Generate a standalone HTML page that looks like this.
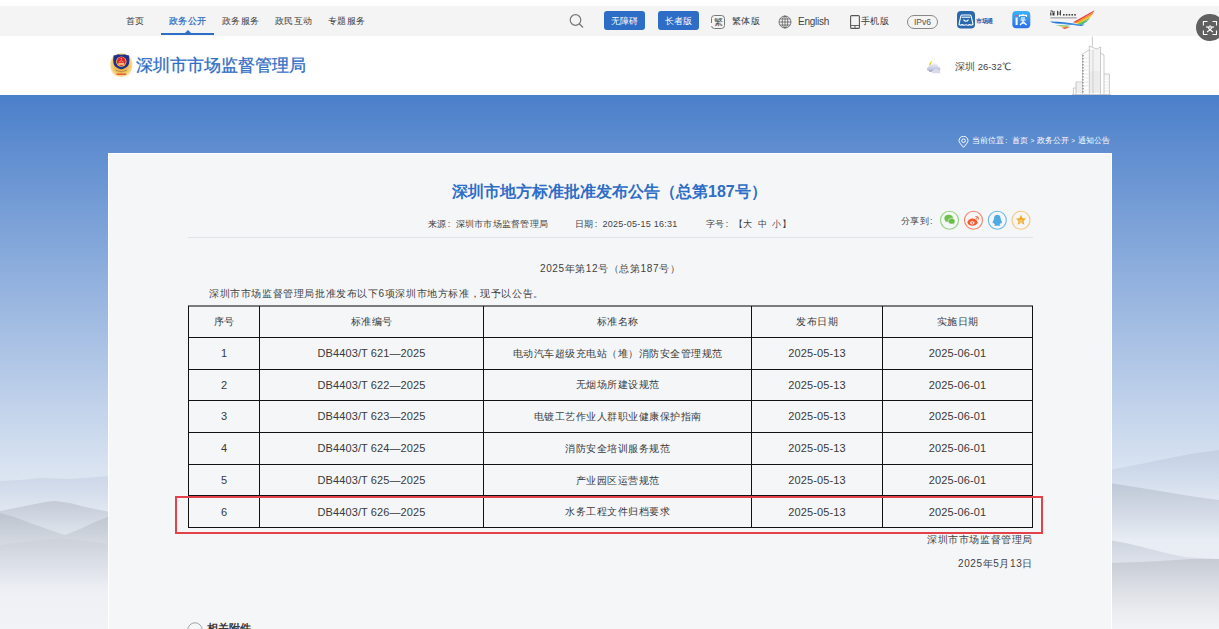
<!DOCTYPE html>
<html><head><meta charset="utf-8">
<style>
*{margin:0;padding:0;box-sizing:border-box}
html,body{width:1219px;height:629px;overflow:hidden;background:#fff}
body{position:relative;font-family:"Liberation Sans",sans-serif;color:#333}
.a{position:absolute;white-space:nowrap;line-height:1}
#topbar{position:absolute;left:0;top:6px;width:1219px;height:30px;background:#f4f4f4}
.nav{font-size:9px;letter-spacing:0.3px;top:17px;color:#3a3a3a}
.btn{position:absolute;top:11px;height:19px;width:41px;background:#2d6dc5;border-radius:3px;color:#fff;font-size:9px;letter-spacing:0.3px;text-align:center;line-height:21px}
#bg{position:absolute;left:0;top:95px;width:1219px;height:534px;background:linear-gradient(180deg,#4a7fca 0%,#92b1de 35%,#d9e3f1 70%,#e6ebf3 80%,#f2f3f6 100%)}
#panel{position:absolute;left:108px;top:153px;width:1004px;height:500px;background:#f5f6f8;border:1px solid #fff}
.t{font-size:10px;letter-spacing:0.6px;color:#3f3f3f}
.cl{display:inline-block;width:1em;padding-left:0.15em;text-align:left}
.lat{font-size:11px;letter-spacing:0.1px}
.cell{position:absolute;text-align:center;font-size:10px;letter-spacing:0.5px;color:#3a3a3a;white-space:nowrap}
</style></head><body>
<div id="topbar"></div>
<div class="a nav" style="left:126px">首页</div>
<div class="a nav" style="left:169px;color:#2a68c2;-webkit-text-stroke:0.2px #2a68c2">政务公开</div>
<div style="position:absolute;left:161px;top:33px;width:53px;height:2px;background:#2f6ec6"></div>
<div style="position:absolute;left:185px;top:30px;width:0;height:0;border-left:3px solid transparent;border-right:3px solid transparent;border-bottom:3px solid #2f6ec6"></div>
<div class="a nav" style="left:222px">政务服务</div>
<div class="a nav" style="left:275px">政民互动</div>
<div class="a nav" style="left:328px">专题服务</div>

<!-- search icon -->
<svg style="position:absolute;left:568px;top:13px" width="18" height="16" viewBox="0 0 18 16"><circle cx="7.5" cy="7" r="5.3" fill="none" stroke="#777" stroke-width="1.2"/><line x1="11.3" y1="10.8" x2="15" y2="14.5" stroke="#777" stroke-width="1.3"/></svg>
<div class="btn" style="left:604px">无障碍</div>
<div class="btn" style="left:658px">长者版</div>
<div style="position:absolute;left:711px;top:15px;width:14px;height:14px;border:1px solid #777;border-radius:3.5px;font-size:8.5px;line-height:12px;text-align:center;color:#444">繁</div><div style="position:absolute;left:710px;top:23px;width:3px;height:3px;background:#f4f4f4"></div>
<div class="a nav" style="left:732px">繁体版</div>
<svg style="position:absolute;left:778px;top:15px" width="14" height="14" viewBox="0 0 14 14"><g fill="none" stroke="#555" stroke-width="0.75"><circle cx="7" cy="7" r="6"/><ellipse cx="7" cy="7" rx="2.8" ry="6"/><line x1="7" y1="1" x2="7" y2="13"/><line x1="1" y1="7" x2="13" y2="7"/><line x1="1.8" y1="4" x2="12.2" y2="4"/><line x1="1.8" y1="10" x2="12.2" y2="10"/></g></svg>
<div class="a" style="left:798px;top:17px;font-size:10px;letter-spacing:-0.25px;color:#444">English</div>
<svg style="position:absolute;left:850px;top:15px" width="10" height="14" viewBox="0 0 10 14"><rect x="0.6" y="0.6" width="8.8" height="12.8" rx="1" fill="none" stroke="#555" stroke-width="1.1"/><line x1="0.6" y1="10.5" x2="9.4" y2="10.5" stroke="#555" stroke-width="0.9"/><line x1="5" y1="10.5" x2="5" y2="13.4" stroke="#555" stroke-width="0.9"/></svg>
<div class="a nav" style="left:861px">手机版</div>
<div style="position:absolute;left:907px;top:15px;width:31px;height:14px;border:1px solid #888;border-radius:7px;font-size:8.5px;line-height:12px;text-align:center;color:#555">IPv6</div>
<!-- shichangtong -->
<svg style="position:absolute;left:957px;top:11px" width="18" height="18" viewBox="0 0 18 18"><rect x="0" y="0" width="18" height="17.5" rx="4" fill="#2a68ae"/>
<g fill="none" stroke="#fff" stroke-width="1.1" stroke-linejoin="round"><path d="M5 4 H13 Q14 4 14.3 5.5 L16 13.3 Q14.2 14.8 12.5 13.5 Q10.8 15 9 13.6 Q7.2 15 5.5 13.5 Q3.8 14.8 2 13.3 L3.7 5.5 Q4 4 5 4Z"/><path d="M4.6 6.2 H13.4"/><path d="M6.5 8.6 Q9 12 11.5 8.6"/></g></svg>
<div class="a" style="left:976px;top:17.5px;font-size:6px;font-weight:bold;letter-spacing:-0.3px;color:#2a5ea8">市场通</div>
<!-- du -->
<svg style="position:absolute;left:1012px;top:11px" width="19" height="18" viewBox="0 0 19 18"><defs><linearGradient id="dug" x1="0" y1="0" x2="0" y2="1"><stop offset="0" stop-color="#3cb2f8"/><stop offset="1" stop-color="#2f6fe6"/></linearGradient></defs><rect x="0.3" y="0" width="18" height="17.3" rx="4" fill="url(#dug)"/>
<rect x="3.6" y="6.5" width="2" height="7.5" fill="#fff"/><path d="M3.2 4 L6 4 L4.6 5.8Z" fill="#f0505a"/>
<g fill="none" stroke="#fff" stroke-width="1.2"><path d="M7.5 6 V4.3 H14.5 V6"/><path d="M9 7 H13"/><path d="M11 4 V3"/><path d="M8.5 9 H13.5"/><path d="M11 9 V13"/><path d="M11 11 L8 14"/><path d="M11.5 11 L14.5 14"/></g></svg>
<!-- shenzhen logo -->
<svg style="position:absolute;left:1045px;top:6px" width="55" height="26" viewBox="0 0 55 26">
<g fill="#333"><path d="M5.5 4.5 h2 v1 h-2z M5.2 6.5 h1.2 v3 h-1.2z M7 5.5 h3 v0.9 h-3z M7.5 7 h2 v2.5 h-2z M12 4.8 h0.9 v4.6 h-0.9z M13.6 5.5 h0.8 v3.5 h-0.8z M15 4.3 h0.9 v5.2 h-0.9z"/></g>
<g fill="#444"><rect x="18" y="8" width="1.6" height="1.6"/><rect x="20.8" y="8" width="1.6" height="1.6"/><rect x="23.6" y="8" width="1.6" height="1.6"/><rect x="26.4" y="8" width="1.6" height="1.6"/><rect x="29.2" y="8" width="1.6" height="1.6"/></g>
<rect x="5.3" y="11" width="26.5" height="1.6" fill="#777" opacity="0.5"/>
<path d="M5 15.5 Q20 15.6 38.5 19.3 L36.5 20 Q22 18 7.5 16.8Z" fill="#1f6fd0"/>
<path d="M8 16.6 Q24 17.5 40 18.4 L38 19.5 Q22 18.5 10 17.5Z" fill="#4a9be8" opacity="0.8"/>
<path d="M10 19 Q18 19.5 25 19.8 L22 20.8 Q15 20.3 10 19Z" fill="#3bb04a"/>
<path d="M14 20.3 Q19 20.8 24 20.6 L20.5 21.8 Q16.5 21.3 14 20.3Z" fill="#f5c71a"/>
<path d="M17 21.4 Q21 21.6 25.5 20.8 L20 23 Q18 22.4 17 21.4Z" fill="#ee4a32"/>
<path d="M28 16.3 L49.5 4.2 L48.3 6.2 L30.5 16.8Z" fill="#ee3b3b"/>
<path d="M29.5 16.8 L48.5 6.5 L47.3 8.8 L32 17.3Z" fill="#f58a25"/>
<path d="M31 17.4 L47 9 L45.5 11 L33.5 17.8Z" fill="#f7c21d"/>
<path d="M32.5 18 L45.3 11.5 L43.5 13.8 L35 18.4Z" fill="#72bf44"/>
<path d="M34.5 18.5 L43.5 14 L41.5 15.8 L37 18.8Z" fill="#2ba88f"/>
</svg>
<!-- translate -->
<div style="position:absolute;left:1196px;top:13.7px;width:27.8px;height:27.8px;border-radius:50%;background:#606060"></div>
<svg style="position:absolute;left:1200px;top:18px" width="19" height="20" viewBox="0 0 19 20"><g fill="none" stroke="#fff" stroke-width="1.1"><path d="M3.4 7.5 V3.5 H7.5"/><path d="M12.5 3.5 H16.5 V7.5"/><path d="M3.4 12.5 V16.5 H7.5"/><path d="M16.5 12.5 V16.5 H12.5"/><path d="M6 9 H14"/><path d="M10 7.3 V9"/><path d="M7.8 9 Q9 12 13 14"/><path d="M12.2 9 Q11 12 7 14"/></g></svg>
<!-- header -->
<svg style="position:absolute;left:106px;top:50px" width="30" height="30" viewBox="0 0 30 30">
<defs><radialGradient id="gold" cx="0.5" cy="0.5" r="0.5"><stop offset="0.55" stop-color="#efb94a"/><stop offset="0.85" stop-color="#f5cf7a"/><stop offset="1" stop-color="#fae3b0"/></radialGradient></defs>
<path d="M15.3 3 Q19.5 3.3 23 5.8 Q26.8 9.5 26.5 15.5 Q26 21.8 22.3 25.2 Q19 27.2 15.3 27 Q11.6 27.2 8.3 25.2 Q4.6 21.8 4.1 15.5 Q3.8 9.5 7.6 5.8 Q11 3.3 15.3 3Z" fill="url(#gold)"/>
<path d="M7.6 5.6 Q10.5 5.2 12.3 4.3 Q13.8 5 15.3 4.6 Q16.8 5 18.3 4.3 Q20.1 5.2 23 5.6 Q23.8 9.5 23 13.8 Q21.5 18.2 15.3 19.4 Q9.1 18.2 7.6 13.8 Q6.8 9.5 7.6 5.6Z" fill="#20308c"/>
<circle cx="15.3" cy="11.6" r="5.2" fill="#f0c45e"/>
<circle cx="15.3" cy="11.5" r="4.4" fill="#e3222b"/>
<path d="M12.4 12.8 H18.2 V14.9 H12.4Z" fill="#f5d37c" opacity="0.9"/>
<path d="M13.2 11.8 Q15.3 9.6 17.4 11.8" fill="none" stroke="#f5d37c" stroke-width="0.7"/>
<circle cx="15.3" cy="8.8" r="0.7" fill="#f5d37c"/>
<path d="M9.5 20.3 Q15.3 23.2 21.1 20.3" fill="none" stroke="#6f6040" stroke-width="0.8" opacity="0.6"/>
<path d="M10.5 23.4 H20.1 V25 H10.5Z" fill="#e2492c" opacity="0.8"/>
</svg>
<div class="a" style="left:136px;top:57px;font-size:17px;-webkit-text-stroke:0.3px #2e6ec6;color:#2e6ec6">深圳市市场监督管理局</div>
<svg style="position:absolute;left:920px;top:55px" width="26" height="23" viewBox="0 0 26 23"><defs><linearGradient id="cl" x1="0" y1="0" x2="0" y2="1"><stop offset="0" stop-color="#f2f2f8"/><stop offset="1" stop-color="#b4b8d8"/></linearGradient></defs>
<path d="M9 10.5 Q9.5 6.5 12.8 5.6 Q10.6 8 10.8 10.5Z" fill="#e6cf1e"/>
<path d="M7.5 15.5 Q6 13.3 8.3 12 Q8.6 9.6 11.5 9.5 Q13 7.5 15.5 8.5 Q17.8 9.3 18 11.5 Q20.5 12 20.5 14.2 Q20.5 16 18.5 16 H9Z" fill="url(#cl)"/>
<path d="M11.8 18.2 Q11 16.5 13 15.8 Q13.8 13.6 16.3 14 Q18.3 13.5 19 15.6 Q20.8 16 20.4 18.2Z" fill="#d9dbec"/>
<path d="M9 16.2 H12" stroke="#888ca8" stroke-width="0.9"/>
</svg>
<div class="a" style="left:955px;top:62px;font-size:9.5px;color:#444">深圳 26-32℃</div>
<svg style="position:absolute;left:1066px;top:34px" width="50" height="61" viewBox="1066 34 50 61">
<g fill="none" stroke="#a8a8a8" stroke-width="0.6">
<line x1="1092.4" y1="36.5" x2="1092.4" y2="47"/>
<path d="M1089.3 94 V46 L1092.4 47.5 L1097 49 L1100.5 47 V94"/>
<path d="M1082.5 94 V54 L1089.3 50"/>
<path d="M1100.5 53 L1104 55 V94"/>
<path d="M1076 94 V82 H1082.5"/>
<path d="M1073.4 94 V88 H1076"/>
<path d="M1104 74 H1109.4 V94"/>
<path d="M1072 94.5 H1111"/>
<path d="M1093 50 V94" stroke="#c4c4c4"/>
</g>
<line x1="1089.5" y1="50" x2="1100" y2="50" stroke="#9a9a9a" stroke-width="0.5" opacity="0.45"/><line x1="1089.5" y1="52" x2="1100" y2="52" stroke="#9a9a9a" stroke-width="0.5" opacity="0.45"/><line x1="1089.5" y1="54" x2="1100" y2="54" stroke="#9a9a9a" stroke-width="0.5" opacity="0.45"/><line x1="1089.5" y1="56" x2="1100" y2="56" stroke="#9a9a9a" stroke-width="0.5" opacity="0.45"/><line x1="1089.5" y1="58" x2="1100" y2="58" stroke="#9a9a9a" stroke-width="0.5" opacity="0.45"/><line x1="1089.5" y1="60" x2="1100" y2="60" stroke="#9a9a9a" stroke-width="0.5" opacity="0.45"/><line x1="1089.5" y1="62" x2="1100" y2="62" stroke="#9a9a9a" stroke-width="0.5" opacity="0.45"/><line x1="1089.5" y1="64" x2="1100" y2="64" stroke="#9a9a9a" stroke-width="0.5" opacity="0.45"/><line x1="1089.5" y1="66" x2="1100" y2="66" stroke="#9a9a9a" stroke-width="0.5" opacity="0.45"/><line x1="1089.5" y1="68" x2="1100" y2="68" stroke="#9a9a9a" stroke-width="0.5" opacity="0.45"/><line x1="1089.5" y1="70" x2="1100" y2="70" stroke="#9a9a9a" stroke-width="0.5" opacity="0.45"/><line x1="1089.5" y1="72" x2="1100" y2="72" stroke="#9a9a9a" stroke-width="0.5" opacity="0.75"/><line x1="1089.5" y1="74" x2="1100" y2="74" stroke="#9a9a9a" stroke-width="0.5" opacity="0.75"/><line x1="1089.5" y1="76" x2="1100" y2="76" stroke="#9a9a9a" stroke-width="0.5" opacity="0.75"/><line x1="1089.5" y1="78" x2="1100" y2="78" stroke="#9a9a9a" stroke-width="0.5" opacity="0.75"/><line x1="1089.5" y1="80" x2="1100" y2="80" stroke="#9a9a9a" stroke-width="0.5" opacity="0.75"/><line x1="1089.5" y1="82" x2="1100" y2="82" stroke="#9a9a9a" stroke-width="0.5" opacity="0.75"/><line x1="1089.5" y1="84" x2="1100" y2="84" stroke="#9a9a9a" stroke-width="0.5" opacity="0.75"/><line x1="1089.5" y1="86" x2="1100" y2="86" stroke="#9a9a9a" stroke-width="0.5" opacity="0.75"/><line x1="1089.5" y1="88" x2="1100" y2="88" stroke="#9a9a9a" stroke-width="0.5" opacity="0.75"/><line x1="1089.5" y1="90" x2="1100" y2="90" stroke="#9a9a9a" stroke-width="0.5" opacity="0.75"/><line x1="1089.5" y1="92" x2="1100" y2="92" stroke="#9a9a9a" stroke-width="0.5" opacity="0.75"/><rect x="1082.4" y="55" width="1.3" height="1.5" fill="#666" opacity="0.7"/><rect x="1082.4" y="58" width="1.3" height="1.5" fill="#666" opacity="0.7"/><rect x="1082.4" y="61" width="1.3" height="1.5" fill="#666" opacity="0.7"/><rect x="1082.4" y="64" width="1.3" height="1.5" fill="#666" opacity="0.7"/><rect x="1082.4" y="67" width="1.3" height="1.5" fill="#666" opacity="0.7"/><rect x="1082.4" y="70" width="1.3" height="1.5" fill="#666" opacity="0.7"/><rect x="1082.4" y="73" width="1.3" height="1.5" fill="#666" opacity="0.7"/><rect x="1082.4" y="76" width="1.3" height="1.5" fill="#666" opacity="0.7"/><rect x="1082.4" y="79" width="1.3" height="1.5" fill="#666" opacity="0.7"/><rect x="1082.4" y="82" width="1.3" height="1.5" fill="#666" opacity="0.7"/><rect x="1082.4" y="85" width="1.3" height="1.5" fill="#666" opacity="0.7"/><rect x="1082.4" y="88" width="1.3" height="1.5" fill="#666" opacity="0.7"/><rect x="1082.4" y="91" width="1.3" height="1.5" fill="#666" opacity="0.7"/><line x1="1084" y1="58" x2="1088.5" y2="58" stroke="#aaa" stroke-width="0.4" opacity="0.6"/><line x1="1084" y1="62" x2="1088.5" y2="62" stroke="#aaa" stroke-width="0.4" opacity="0.6"/><line x1="1084" y1="66" x2="1088.5" y2="66" stroke="#aaa" stroke-width="0.4" opacity="0.6"/><line x1="1084" y1="70" x2="1088.5" y2="70" stroke="#aaa" stroke-width="0.4" opacity="0.6"/><line x1="1084" y1="74" x2="1088.5" y2="74" stroke="#aaa" stroke-width="0.4" opacity="0.6"/><line x1="1084" y1="78" x2="1088.5" y2="78" stroke="#aaa" stroke-width="0.4" opacity="0.6"/><line x1="1084" y1="82" x2="1088.5" y2="82" stroke="#aaa" stroke-width="0.4" opacity="0.6"/><line x1="1084" y1="86" x2="1088.5" y2="86" stroke="#aaa" stroke-width="0.4" opacity="0.6"/><line x1="1084" y1="90" x2="1088.5" y2="90" stroke="#aaa" stroke-width="0.4" opacity="0.6"/><line x1="1076" y1="84" x2="1082" y2="84" stroke="#999" stroke-width="0.5" opacity="0.6"/><line x1="1076" y1="86" x2="1082" y2="86" stroke="#999" stroke-width="0.5" opacity="0.6"/><line x1="1076" y1="88" x2="1082" y2="88" stroke="#999" stroke-width="0.5" opacity="0.6"/><line x1="1076" y1="90" x2="1082" y2="90" stroke="#999" stroke-width="0.5" opacity="0.6"/><line x1="1076" y1="92" x2="1082" y2="92" stroke="#999" stroke-width="0.5" opacity="0.6"/><line x1="1104" y1="76" x2="1109" y2="76" stroke="#aaa" stroke-width="0.4" opacity="0.5"/><line x1="1104" y1="79" x2="1109" y2="79" stroke="#aaa" stroke-width="0.4" opacity="0.5"/><line x1="1104" y1="82" x2="1109" y2="82" stroke="#aaa" stroke-width="0.4" opacity="0.5"/><line x1="1104" y1="85" x2="1109" y2="85" stroke="#aaa" stroke-width="0.4" opacity="0.5"/><line x1="1104" y1="88" x2="1109" y2="88" stroke="#aaa" stroke-width="0.4" opacity="0.5"/><line x1="1104" y1="91" x2="1109" y2="91" stroke="#aaa" stroke-width="0.4" opacity="0.5"/>
</svg>

<!-- background -->
<div id="bg"></div>
<svg style="position:absolute;left:0;top:420px" width="1219" height="209" viewBox="0 420 1219 209">
<defs><linearGradient id="L1" gradientUnits="userSpaceOnUse" x1="0" y1="476" x2="0" y2="515"><stop offset="0" stop-color="#c9d4e5" stop-opacity="0.8"/><stop offset="1" stop-color="#c9d4e5" stop-opacity="0"/></linearGradient><linearGradient id="L2" gradientUnits="userSpaceOnUse" x1="0" y1="501" x2="0" y2="550"><stop offset="0" stop-color="#c4cbd7" stop-opacity="1"/><stop offset="1" stop-color="#cdd3dd" stop-opacity="0"/></linearGradient><linearGradient id="L3" gradientUnits="userSpaceOnUse" x1="0" y1="513" x2="0" y2="585"><stop offset="0" stop-color="#bec4cf" stop-opacity="0.95"/><stop offset="0.45" stop-color="#c9ced7" stop-opacity="0.55"/><stop offset="1" stop-color="#d5d8df" stop-opacity="0"/></linearGradient><linearGradient id="L4" gradientUnits="userSpaceOnUse" x1="0" y1="537" x2="0" y2="595"><stop offset="0" stop-color="#c8cdd6" stop-opacity="0.5"/><stop offset="1" stop-color="#c8cdd6" stop-opacity="0"/></linearGradient><linearGradient id="R1" gradientUnits="userSpaceOnUse" x1="0" y1="450" x2="0" y2="500"><stop offset="0" stop-color="#c3cfe2" stop-opacity="0.9"/><stop offset="1" stop-color="#c3cfe2" stop-opacity="0"/></linearGradient><linearGradient id="R2" gradientUnits="userSpaceOnUse" x1="0" y1="483" x2="0" y2="540"><stop offset="0" stop-color="#bfc8d6" stop-opacity="0.95"/><stop offset="1" stop-color="#bfc8d6" stop-opacity="0"/></linearGradient><linearGradient id="R3" gradientUnits="userSpaceOnUse" x1="0" y1="540" x2="0" y2="585"><stop offset="0" stop-color="#cad0dc" stop-opacity="0.85"/><stop offset="1" stop-color="#cad0dc" stop-opacity="0"/></linearGradient><linearGradient id="R4" gradientUnits="userSpaceOnUse" x1="0" y1="559" x2="0" y2="629"><stop offset="0" stop-color="#c6cad3" stop-opacity="0.95"/><stop offset="0.5" stop-color="#d2d5dc" stop-opacity="0.55"/><stop offset="1" stop-color="#e0e2e7" stop-opacity="0"/></linearGradient></defs>
<path d="M0 481 L20 480 L40 478 L70 479 L110 476 L110 629 L0 629Z" fill="url(#L1)"/>
<path d="M0 511 L15 508 L30 505 L45 502 L55 501 L70 503 L85 507 L110 512 L110 629 L0 629Z" fill="url(#L2)"/>
<path d="M0 513 L15 517 L30 523 L50 530 L65 535 L80 529 L95 522 L110 516 L110 629 L0 629Z" fill="url(#L3)"/>
<path d="M0 545 L30 541 L60 538 L85 541 L110 544 L110 629 L0 629Z" fill="url(#L4)"/>
<path d="M1110 470 L1135 465 L1160 460 L1190 454 L1219 450 L1219 629 L1110 629Z" fill="url(#R1)"/>
<path d="M1110 483 L1135 487 L1160 491 L1190 496 L1219 500 L1219 629 L1110 629Z" fill="url(#R2)"/>
<path d="M1110 540 L1130 544 L1150 549 L1170 554 L1185 557 L1219 559 L1219 629 L1110 629Z" fill="url(#R3)"/>
<path d="M1110 563 L1140 562 L1160 561 L1190 559 L1219 559 L1219 629 L1110 629Z" fill="url(#R4)"/>
</svg>
<!-- breadcrumb -->
<svg style="position:absolute;left:958px;top:136px" width="11" height="12" viewBox="0 0 11 12"><path d="M5.5 11.3 Q1 6.5 1 4.7 A4.5 4.5 0 0 1 10 4.7 Q10 6.5 5.5 11.3Z" fill="none" stroke="#fff" stroke-width="1"/><circle cx="5.5" cy="4.7" r="1.8" fill="none" stroke="#fff" stroke-width="1"/></svg>
<div class="a" style="left:972px;top:137px;font-size:8px;color:#fff">当前位置<span class="cl">:</span>首页<span style="font-size:6.5px;margin:0 2.5px">&gt;</span>政务公开<span style="font-size:6.5px;margin:0 2.5px">&gt;</span>通知公告</div>

<div id="panel"></div>
<div class="a" style="left:452px;top:184px;font-size:16px;font-weight:bold;color:#2e6ec6">深圳市地方标准批准发布公告（总第187号）</div>
<div class="a" style="left:428px;top:220px;font-size:9px;letter-spacing:0.25px;color:#444">来源<span class="cl">:</span>深圳市市场监督管理局</div>
<div class="a" style="left:575px;top:220px;font-size:9px;letter-spacing:0.25px;color:#444">日期<span class="cl">:</span>2025-05-15 16:31</div>
<div class="a" style="left:706px;top:220px;font-size:9px;letter-spacing:0.25px;color:#444">字号<span class="cl">:</span>【大&nbsp; 中&nbsp; 小】</div>
<div class="a" style="left:901px;top:217px;font-size:9px;letter-spacing:0.25px;color:#444">分享到<span class="cl">:</span></div>
<svg style="position:absolute;left:936px;top:208px" width="98" height="25" viewBox="0 0 98 25">
<circle cx="13.5" cy="12.2" r="9" fill="none" stroke="#94d27f" stroke-width="1.1"/>
<circle cx="37.5" cy="12.2" r="9" fill="none" stroke="#f5846a" stroke-width="1.1"/>
<circle cx="61.3" cy="12.2" r="9" fill="none" stroke="#6cb9ea" stroke-width="1.1"/>
<circle cx="85" cy="12.2" r="9" fill="none" stroke="#f7c97f" stroke-width="1.1"/>
<ellipse cx="12.7" cy="10.2" rx="4.3" ry="3.5" fill="#6ec14c"/>
<path d="M10 12.8 L9.2 14.2 L11.5 13.2Z" fill="#6ec14c"/>
<ellipse cx="15.6" cy="13.2" rx="3.5" ry="2.9" fill="#69bd47" stroke="#f4f5f7" stroke-width="0.6"/>
<path d="M17.5 15.5 L18.3 16.6 L16.3 15.8Z" fill="#69bd47"/>
<ellipse cx="36.5" cy="14.2" rx="5" ry="3.6" fill="#f5592c"/>
<ellipse cx="36.3" cy="14.8" rx="2.3" ry="1.6" fill="#f4f5f7"/>
<circle cx="36.3" cy="14.9" r="0.8" fill="#f5592c"/>
<path d="M39.5 8.5 Q42.5 8.5 42.3 11.5" fill="none" stroke="#f5592c" stroke-width="1.2"/>
<path d="M39.8 10.2 Q40.9 10.3 40.8 11.4" fill="none" stroke="#f5592c" stroke-width="0.9"/>
<path d="M61.3 6.8 Q64.4 6.8 64.6 10.5 Q64.7 12 65.8 13.8 Q66.5 15.5 65.2 15.3 L64.8 14.8 Q64.5 16.2 63.5 16.8 Q64.8 17.4 63.8 17.8 L58.8 17.8 Q57.8 17.4 59.1 16.8 Q58.1 16.2 57.8 14.8 L57.4 15.3 Q56.1 15.5 56.8 13.8 Q57.9 12 58 10.5 Q58.2 6.8 61.3 6.8Z" fill="#4fa9e2"/>
<path d="M85 6.8 L86.6 10.3 L90.2 10.6 L87.5 13 L88.4 16.8 L85 14.8 L81.6 16.8 L82.5 13 L79.8 10.6 L83.4 10.3Z" fill="#f6a928"/>
<path d="M83.3 12.3 H86.3 L83.6 14.3 H86.8" fill="none" stroke="#fde9c0" stroke-width="0.6"/>
</svg>
<div style="position:absolute;left:188px;top:237px;width:845px;height:1px;background:#e1e3e6"></div>

<div class="a t" style="left:540px;top:264px">2025年第12号（总第187号）</div>
<div class="a t" style="left:209px;top:289px">深圳市市场监督管理局批准发布以下6项深圳市地方标准，现予以公告。</div>

<div id="tbl">
<div style="position:absolute;left:188px;top:305px;width:845px;height:2px;background:#7c7c7c"></div>
<div style="position:absolute;left:188px;top:337px;width:845px;height:1px;background:#111"></div>
<div style="position:absolute;left:188px;top:369px;width:845px;height:1px;background:#111"></div>
<div style="position:absolute;left:188px;top:400px;width:845px;height:1px;background:#111"></div>
<div style="position:absolute;left:188px;top:432px;width:845px;height:1px;background:#111"></div>
<div style="position:absolute;left:188px;top:464px;width:845px;height:1px;background:#111"></div>
<div style="position:absolute;left:188px;top:495px;width:845px;height:1px;background:#111"></div>
<div style="position:absolute;left:188px;top:527px;width:845px;height:1px;background:#111"></div>
<div style="position:absolute;left:188px;top:306px;width:1px;height:222px;background:#111"></div>
<div style="position:absolute;left:259px;top:306px;width:1px;height:222px;background:#111"></div>
<div style="position:absolute;left:483px;top:306px;width:1px;height:222px;background:#111"></div>
<div style="position:absolute;left:751px;top:306px;width:1px;height:222px;background:#111"></div>
<div style="position:absolute;left:882px;top:306px;width:1px;height:222px;background:#111"></div>
<div style="position:absolute;left:1032px;top:306px;width:1px;height:222px;background:#111"></div>
<div class="cell" style="left:189px;top:307px;width:70px;height:30px;line-height:30px">序号</div>
<div class="cell" style="left:260px;top:307px;width:223px;height:30px;line-height:30px">标准编号</div>
<div class="cell" style="left:484px;top:307px;width:267px;height:30px;line-height:30px">标准名称</div>
<div class="cell" style="left:752px;top:307px;width:130px;height:30px;line-height:30px">发布日期</div>
<div class="cell" style="left:883px;top:307px;width:149px;height:30px;line-height:30px">实施日期</div>
<div class="cell" style="left:189px;top:338px;width:70px;height:31px;line-height:31px"><span class="lat">1</span></div>
<div class="cell" style="left:260px;top:338px;width:223px;height:31px;line-height:31px"><span class="lat">DB4403/T 621—2025</span></div>
<div class="cell" style="left:484px;top:338px;width:267px;height:31px;line-height:31px">电动汽车超级充电站（堆）消防安全管理规范</div>
<div class="cell" style="left:752px;top:338px;width:130px;height:31px;line-height:31px"><span class="lat">2025-05-13</span></div>
<div class="cell" style="left:883px;top:338px;width:149px;height:31px;line-height:31px"><span class="lat">2025-06-01</span></div>
<div class="cell" style="left:189px;top:370px;width:70px;height:30px;line-height:30px"><span class="lat">2</span></div>
<div class="cell" style="left:260px;top:370px;width:223px;height:30px;line-height:30px"><span class="lat">DB4403/T 622—2025</span></div>
<div class="cell" style="left:484px;top:370px;width:267px;height:30px;line-height:30px">无烟场所建设规范</div>
<div class="cell" style="left:752px;top:370px;width:130px;height:30px;line-height:30px"><span class="lat">2025-05-13</span></div>
<div class="cell" style="left:883px;top:370px;width:149px;height:30px;line-height:30px"><span class="lat">2025-06-01</span></div>
<div class="cell" style="left:189px;top:401px;width:70px;height:31px;line-height:31px"><span class="lat">3</span></div>
<div class="cell" style="left:260px;top:401px;width:223px;height:31px;line-height:31px"><span class="lat">DB4403/T 623—2025</span></div>
<div class="cell" style="left:484px;top:401px;width:267px;height:31px;line-height:31px">电镀工艺作业人群职业健康保护指南</div>
<div class="cell" style="left:752px;top:401px;width:130px;height:31px;line-height:31px"><span class="lat">2025-05-13</span></div>
<div class="cell" style="left:883px;top:401px;width:149px;height:31px;line-height:31px"><span class="lat">2025-06-01</span></div>
<div class="cell" style="left:189px;top:433px;width:70px;height:31px;line-height:31px"><span class="lat">4</span></div>
<div class="cell" style="left:260px;top:433px;width:223px;height:31px;line-height:31px"><span class="lat">DB4403/T 624—2025</span></div>
<div class="cell" style="left:484px;top:433px;width:267px;height:31px;line-height:31px">消防安全培训服务规范</div>
<div class="cell" style="left:752px;top:433px;width:130px;height:31px;line-height:31px"><span class="lat">2025-05-13</span></div>
<div class="cell" style="left:883px;top:433px;width:149px;height:31px;line-height:31px"><span class="lat">2025-06-01</span></div>
<div class="cell" style="left:189px;top:465px;width:70px;height:31px;line-height:31px"><span class="lat">5</span></div>
<div class="cell" style="left:260px;top:465px;width:223px;height:31px;line-height:31px"><span class="lat">DB4403/T 625—2025</span></div>
<div class="cell" style="left:484px;top:465px;width:267px;height:31px;line-height:31px">产业园区运营规范</div>
<div class="cell" style="left:752px;top:465px;width:130px;height:31px;line-height:31px"><span class="lat">2025-05-13</span></div>
<div class="cell" style="left:883px;top:465px;width:149px;height:31px;line-height:31px"><span class="lat">2025-06-01</span></div>
<div class="cell" style="left:189px;top:497px;width:70px;height:30px;line-height:30px"><span class="lat">6</span></div>
<div class="cell" style="left:260px;top:497px;width:223px;height:30px;line-height:30px"><span class="lat">DB4403/T 626—2025</span></div>
<div class="cell" style="left:484px;top:497px;width:267px;height:30px;line-height:30px">水务工程文件归档要求</div>
<div class="cell" style="left:752px;top:497px;width:130px;height:30px;line-height:30px"><span class="lat">2025-05-13</span></div>
<div class="cell" style="left:883px;top:497px;width:149px;height:30px;line-height:30px"><span class="lat">2025-06-01</span></div>
<div style="position:absolute;left:175px;top:496px;width:868px;height:38px;border:2px solid #e4424a"></div>
</div><!--/tbl-->

<div class="a t" style="left:927px;top:535px">深圳市市场监督管理局</div>
<div class="a t" style="left:958px;top:559px">2025年5月13日</div>
<svg style="position:absolute;left:187px;top:622px" width="17" height="10" viewBox="0 0 17 10"><circle cx="8" cy="8" r="7.2" fill="none" stroke="#999" stroke-width="0.9"/></svg>
<div class="a" style="left:207px;top:623px;font-size:11px;font-weight:bold;color:#3a3a3a">相关附件</div>
</body></html>
